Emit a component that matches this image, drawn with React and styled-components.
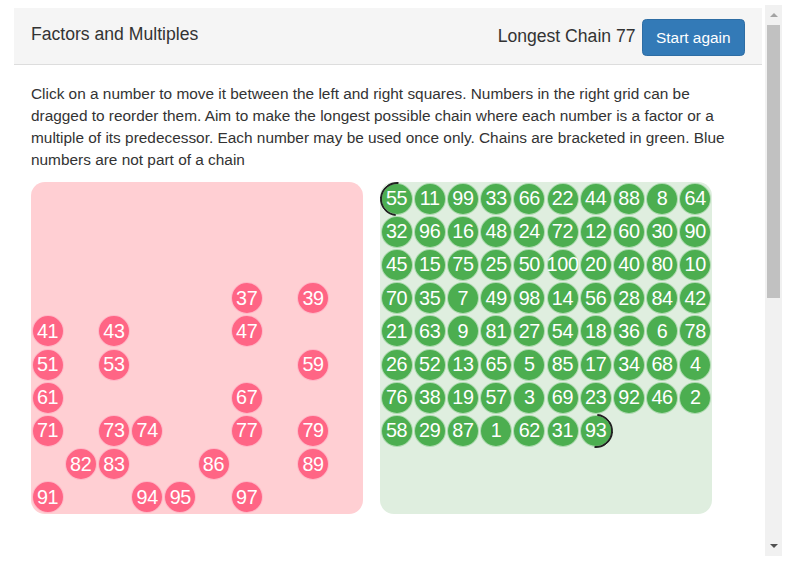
import React from "react";
import styled, { createGlobalStyle, css } from "styled-components";

const GlobalStyle = createGlobalStyle`
  html, body {
    margin: 0;
    padding: 0;
    background: #fff;
    overflow: hidden;
  }
  body {
    font-family: "Liberation Sans", Arial, Helvetica, sans-serif;
    color: #333;
  }
`;

const chain = [
  55, 11, 99, 33, 66, 22, 44, 88, 8, 64,
  32, 96, 16, 48, 24, 72, 12, 60, 30, 90,
  45, 15, 75, 25, 50, 100, 20, 40, 80, 10,
  70, 35, 7, 49, 98, 14, 56, 28, 84, 42,
  21, 63, 9, 81, 27, 54, 18, 36, 6, 78,
  26, 52, 13, 65, 5, 85, 17, 34, 68, 4,
  76, 38, 19, 57, 3, 69, 23, 92, 46, 2,
  58, 29, 87, 1, 62, 31, 93,
];

const unused = Array.from({ length: 100 }, (_, i) => i + 1).filter(
  (n) => !chain.includes(n)
);

const Page = styled.div`
  display: flex;
  align-items: flex-start;
  padding-top: 5px;
  height: 568px;
`;

const Viewport = styled.div`
  width: 765px;
  height: 551px;
  overflow: hidden;
`;

const ScrollBar = styled.div`
  width: 17px;
  height: 551px;
  background: #f1f1f1;
  display: flex;
  flex-direction: column;
  align-items: center;
`;

const Arrow = styled.div`
  height: 20px;
  width: 17px;
  display: flex;
  align-items: center;
  justify-content: center;
  &::before {
    content: "";
    width: 0;
    height: 0;
    border-left: 4px solid transparent;
    border-right: 4px solid transparent;
    ${(p) =>
      p.$down
        ? css`border-top: 4px solid #505050;`
        : css`border-bottom: 4px solid #a3a3a3;`}
  }
`;

const Thumb = styled.div`
  width: 13px;
  height: 273px;
  background: #c1c1c1;
`;

const Spacer = styled.div`
  flex: 1;
`;

const Card = styled.div`
  margin: 3px 0 0 14px;
  width: 748px;
  min-height: 1030px;
  background: #fff;
`;

const Header = styled.div`
  display: flex;
  align-items: flex-start;
  justify-content: space-between;
  height: 37px;
  padding: 11px 17px 8px;
  background: #f5f5f5;
  border-bottom: 1px solid #ddd;
`;

const Title = styled.h3`
  margin: 5px 0 0;
  font-size: 17.6px;
  font-weight: normal;
  color: #333;
`;

const Controls = styled.div`
  display: flex;
  align-items: flex-start;
  gap: 6px;
`;

const ChainLength = styled.span`
  margin-top: 7px;
  font-size: 17.6px;
  color: #333;
`;

const Button = styled.button`
  height: 37px;
  padding: 0 13.5px;
  font-family: inherit;
  font-size: 15.4px;
  color: #fff;
  background: #337ab7;
  border: 1px solid #2e6da4;
  border-radius: 4.4px;
  cursor: pointer;
`;

const Body = styled.div`
  padding: 17.5px 17px 16.5px;
`;

const Intro = styled.p`
  margin: 0 0 11.5px;
  font-size: 15.4px;
  line-height: 22px;
  color: #333;
`;

const Boards = styled.div`
  display: flex;
  gap: 17px;
`;

const Board = styled.div`
  width: 332px;
  height: 332px;
  border-radius: 14px;
  background: ${(p) => p.$bg};
  display: grid;
  grid-template-columns: repeat(10, 33.2px);
  grid-auto-rows: 33.2px;
  align-content: start;
`;

const bracket = css`
  &::after {
    content: "";
    position: absolute;
    inset: -2px;
    border-radius: 50%;
    border: 2px solid transparent;
    transform: rotate(-40deg);
  }
`;

const Chip = styled.div`
  position: relative;
  box-sizing: border-box;
  width: 32px;
  height: 32px;
  place-self: center;
  border-radius: 50%;
  border: 1px solid rgba(255, 255, 255, 0.55);
  background: ${(p) => p.$color};
  color: #fff;
  font-size: 19.8px;
  letter-spacing: -0.3px;
  display: flex;
  align-items: center;
  justify-content: center;
  white-space: nowrap;
  ${(p) =>
    p.$row &&
    css`
      grid-row: ${p.$row};
      grid-column: ${p.$col};
    `}
  ${(p) =>
    p.$open &&
    css`
      ${bracket}
      &::after {
        border-left-color: #222;
        border-top-color: #222;
      }
    `}
  ${(p) =>
    p.$close &&
    css`
      ${bracket}
      &::after {
        border-right-color: #222;
        border-bottom-color: #222;
      }
    `}
`;

export default function App() {
  return (
    <>
      <GlobalStyle />
      <Page>
        <Viewport>
          <Card>
            <Header>
              <Title>Factors and Multiples</Title>
              <Controls>
                <ChainLength>Longest Chain {chain.length}</ChainLength>
                <Button>Start again</Button>
              </Controls>
            </Header>
            <Body>
              <Intro>
                Click on a number to move it between the left and right
                squares. Numbers in the right grid can be dragged to reorder
                them. Aim to make the longest possible chain where each number
                is a factor or a multiple of its predecessor. Each number may
                be used once only. Chains are bracketed in green. Blue numbers
                are not part of a chain
              </Intro>
              <Boards>
                <Board $bg="#ffcfd3">
                  {unused.map((n) => (
                    <Chip
                      key={n}
                      $color="#ff6585"
                      $row={Math.floor((n - 1) / 10) + 1}
                      $col={((n - 1) % 10) + 1}
                    >
                      {n}
                    </Chip>
                  ))}
                </Board>
                <Board $bg="#dfeedf">
                  {chain.map((n, i) => (
                    <Chip
                      key={n}
                      $color="#4cae50"
                      $open={i === 0}
                      $close={i === chain.length - 1}
                    >
                      {n}
                    </Chip>
                  ))}
                </Board>
              </Boards>
            </Body>
          </Card>
        </Viewport>
        <ScrollBar>
          <Arrow />
          <Thumb />
          <Spacer />
          <Arrow $down />
        </ScrollBar>
      </Page>
    </>
  );
}
